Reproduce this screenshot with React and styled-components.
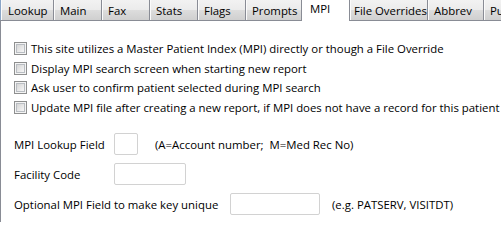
import React from 'react'
import styled, { createGlobalStyle } from 'styled-components'

const GlobalStyle = createGlobalStyle`
  html, body {
    margin: 0;
    padding: 0;
    background: #ffffff;
  }
  body {
    font-family: "Open Sans", "Liberation Sans", Arial, sans-serif;
    font-size: 11.4px;
    color: #000000;
  }
`

const Window = styled.div`
  width: 501px;
  height: 222px;
  overflow: hidden;
  background: #ffffff;
  display: flex;
  flex-direction: column;
`

const TabStrip = styled.div`
  display: flex;
  height: 21px;
  flex-shrink: 0;
  border-bottom: 1px solid #898c95;
  box-sizing: border-box;
`

const Tab = styled.div`
  flex-shrink: 0;
  width: ${p => p.w}px;
  box-sizing: border-box;
  height: ${p => (p.active ? 21 : 20)}px;
  padding: ${p => (p.active ? '2px' : '4px')} 0 0 ${p => p.pad || 6}px;
  border-right: 1px solid #898c95;
  border-left: ${p => (p.first ? '1px solid #8aa5c7' : 'none')};
  background: ${p => (p.active ? '#ffffff' : 'linear-gradient(#f2f2f2, #ebebeb 50%, #dddddd 51%, #cfcfcf)')};
  box-shadow: ${p => (p.active ? 'none' : 'inset 1px 0 0 #fbfbfb')};
  white-space: nowrap;
  overflow: hidden;
  line-height: 14px;
  position: relative;
  z-index: ${p => (p.active ? 1 : 0)};
`

const Panel = styled.div`
  flex: 1;
  border-left: 1px solid #898c95;
  padding: 18px 0 0 13px;
  display: flex;
  flex-direction: column;
`

const CheckRow = styled.label`
  display: flex;
  align-items: center;
  height: 19.5px;
  gap: 4px;
  white-space: nowrap;
`

const Box = styled.span`
  width: 13px;
  height: 13px;
  box-sizing: border-box;
  border: 1px solid #8e8f8f;
  background: #f4f4f4;
  display: flex;
  align-items: center;
  justify-content: center;
  flex-shrink: 0;
  &::after {
    content: '';
    width: 9px;
    height: 9px;
    box-sizing: border-box;
    border: 1px solid #b9bdc2;
    background: linear-gradient(135deg, #d6d6d6, #f6f6f6);
  }
`

const Form = styled.div`
  display: flex;
  flex-direction: column;
  gap: 8px;
  margin-top: 16px;
`

const FieldRow = styled.div`
  display: flex;
  align-items: center;
  height: 22px;
  white-space: nowrap;
`

const Label = styled.span`
  width: ${p => p.w}px;
  flex-shrink: 0;
`

const Input = styled.span`
  width: ${p => p.w}px;
  height: 22px;
  box-sizing: border-box;
  border: 1px solid #d2d2d2;
  border-radius: 2px;
  background: #ffffff;
  flex-shrink: 0;
`

const Hint = styled.span`
  margin-left: ${p => p.ml}px;
`

const tabs = [
  { label: 'Lookup', w: 54, first: true, pad: 7 },
  { label: 'Main', w: 48 },
  { label: 'Fax', w: 48 },
  { label: 'Stats', w: 48 },
  { label: 'Flags', w: 48 },
  { label: 'Prompts', w: 56 },
  { label: 'MPI', w: 48, active: true, pad: 8 },
  { label: 'File Overrides', w: 78, pad: 4 },
  { label: 'Abbrev', w: 56 },
  { label: 'Pub', w: 40 },
]

const checks = [
  'This site utilizes a Master Patient Index (MPI) directly or though a File Override',
  'Display MPI search screen when starting new report',
  'Ask user to confirm patient selected during MPI search',
  'Update MPI file after creating a new report, if MPI does not have a record for this patient',
]

export default function App() {
  return (
    <>
      <GlobalStyle />
      <Window>
        <TabStrip>
          {tabs.map(t => (
            <Tab key={t.label} w={t.w} first={t.first} active={t.active} pad={t.pad}>
              {t.label}
            </Tab>
          ))}
        </TabStrip>
        <Panel>
          {checks.map(c => (
            <CheckRow key={c}>
              <Box />
              {c}
            </CheckRow>
          ))}
          <Form>
            <FieldRow>
              <Label w={100}>MPI Lookup Field</Label>
              <Input w={24} />
              <Hint ml={17}>(A=Account number;&nbsp; M=Med Rec No)</Hint>
            </FieldRow>
            <FieldRow>
              <Label w={100}>Facility Code</Label>
              <Input w={72} />
            </FieldRow>
            <FieldRow>
              <Label w={216}>Optional MPI Field to make key unique</Label>
              <Input w={90} />
              <Hint ml={12}>(e.g. PATSERV, VISITDT)</Hint>
            </FieldRow>
          </Form>
        </Panel>
      </Window>
    </>
  )
}
